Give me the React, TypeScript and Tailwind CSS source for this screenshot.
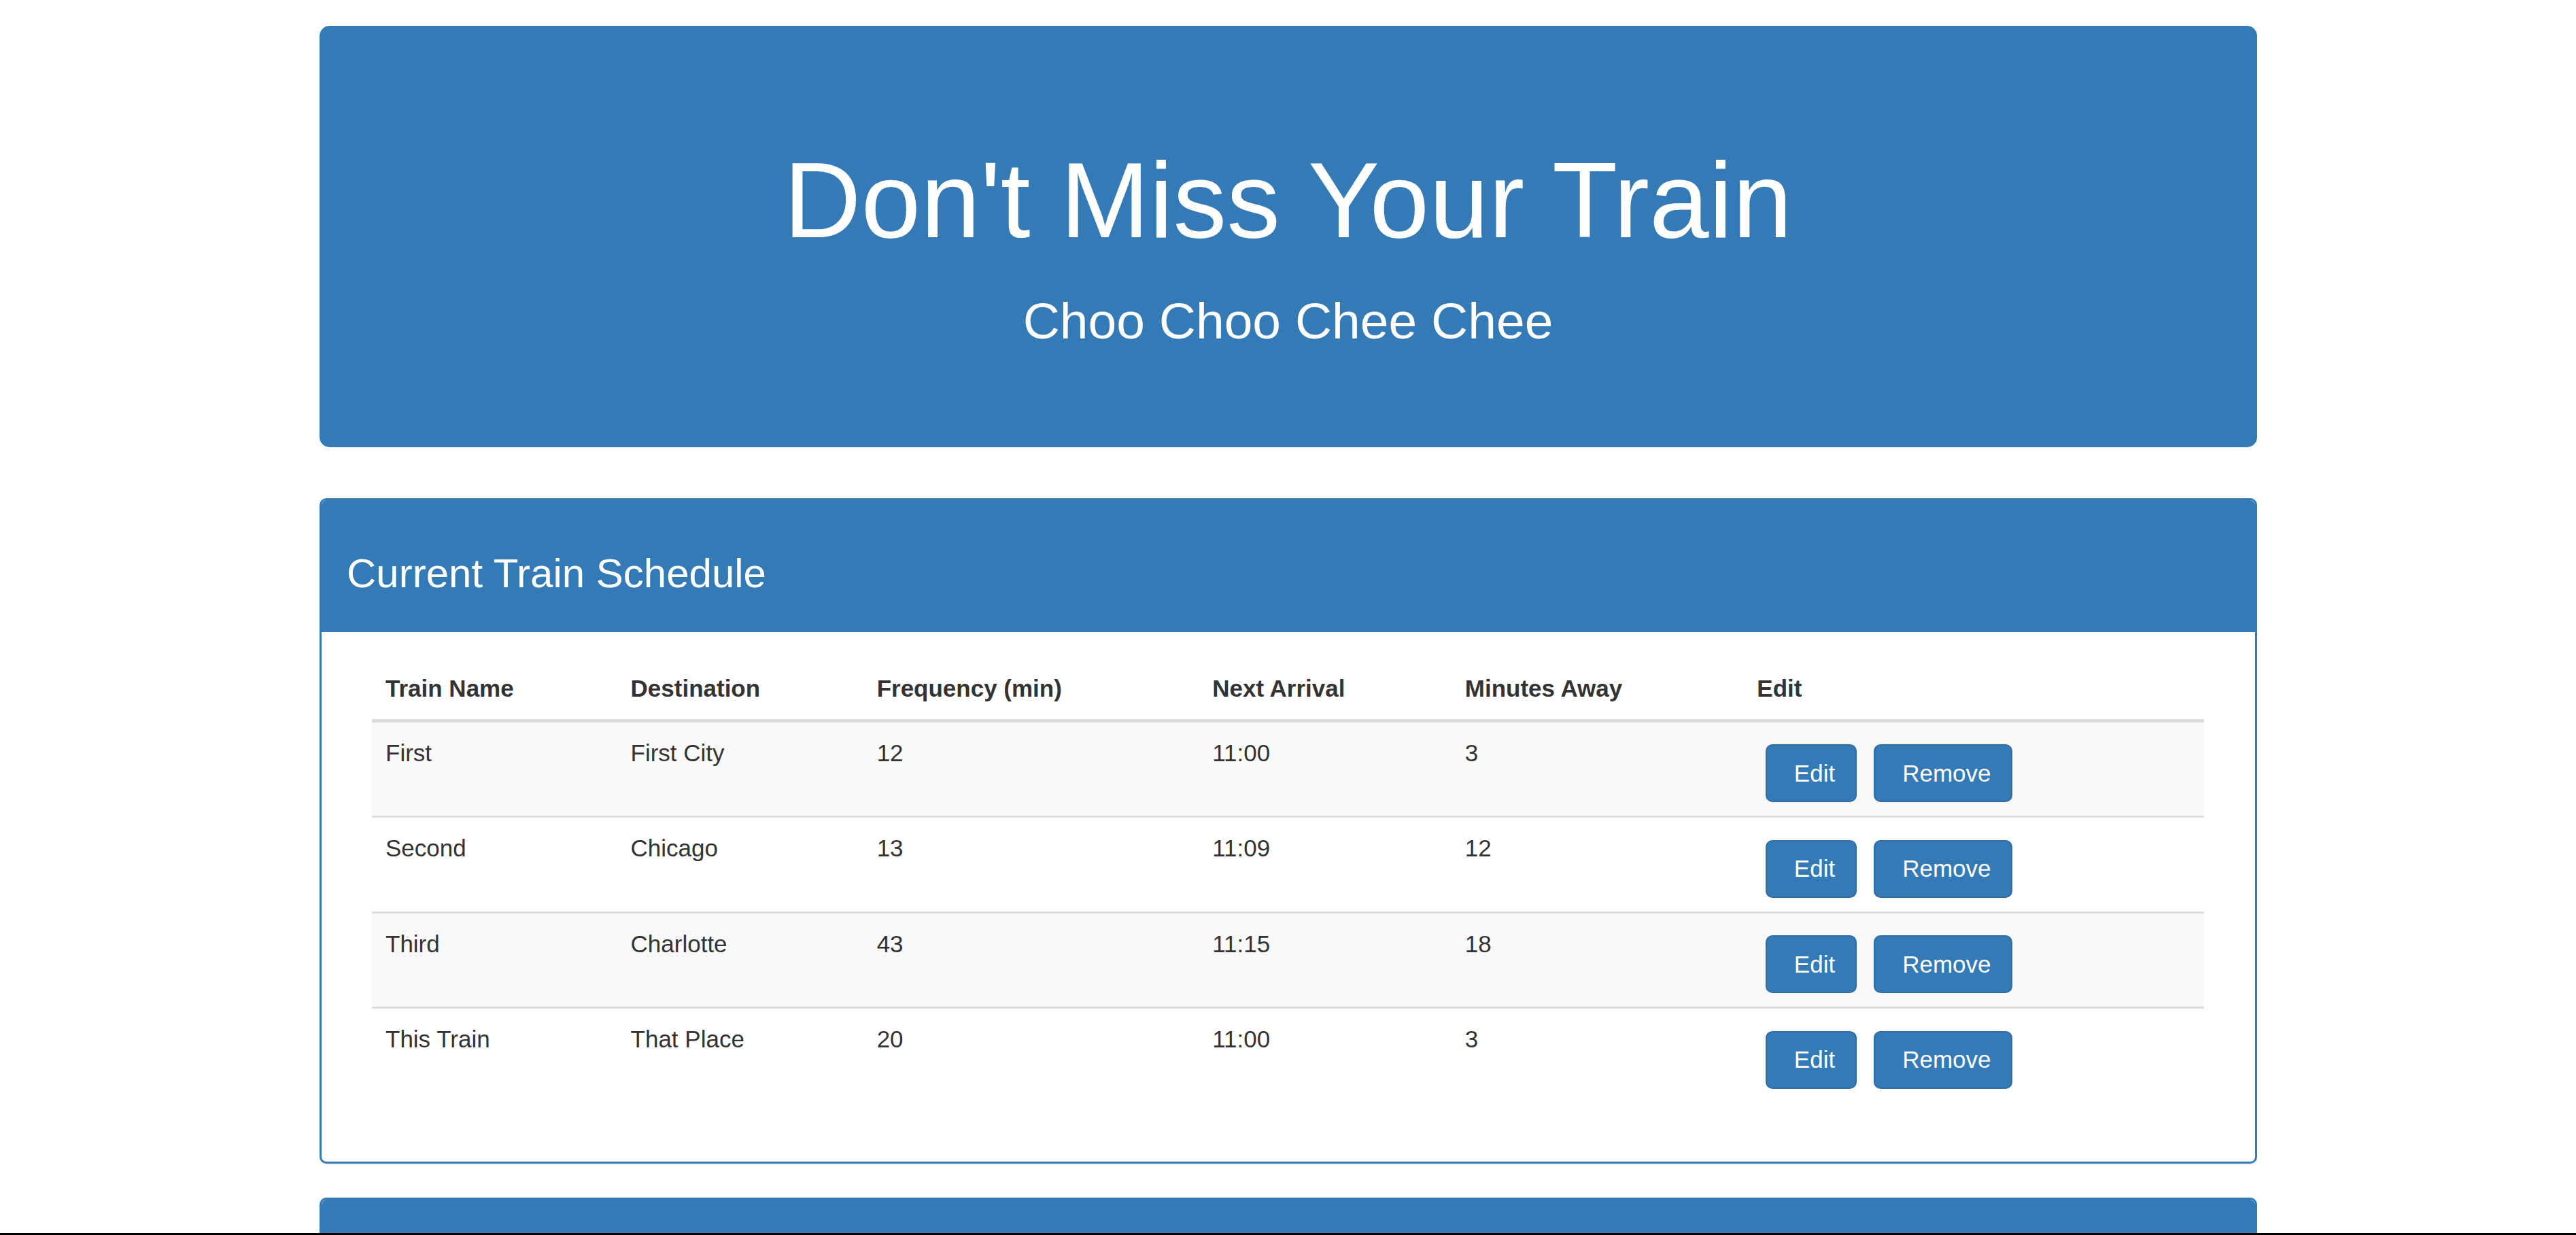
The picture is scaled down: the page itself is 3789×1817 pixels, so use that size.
import React from 'react';

const trains = [
  { name: 'First', destination: 'First City', frequency: 12, next: '11:00', away: 3 },
  { name: 'Second', destination: 'Chicago', frequency: 13, next: '11:09', away: 12 },
  { name: 'Third', destination: 'Charlotte', frequency: 43, next: '11:15', away: 18 },
  { name: 'This Train', destination: 'That Place', frequency: 20, next: '11:00', away: 3 },
];

const columns = [
  { label: 'Train Name', width: 'w-[360.5px]' },
  { label: 'Destination', width: 'w-[362px]' },
  { label: 'Frequency (min)', width: 'w-[493.5px]' },
  { label: 'Next Arrival', width: 'w-[371.5px]' },
  { label: 'Minutes Away', width: 'w-[429.5px]' },
  { label: 'Edit', width: 'w-[677.5px]' },
];

function Btn({ children }: { children: React.ReactNode }) {
  return (
    <button className="h-[85px] pl-[40px] pr-[30px] bg-[#337ab7] border-[2.5px] border-[#2e6da4] rounded-[10px] text-white text-[35px] leading-[50px]">
      {children}
    </button>
  );
}

export default function App() {
  return (
    <div className="min-h-screen bg-white text-[#333] text-[35px] leading-[50px] font-['Liberation_Sans',Arial,sans-serif]">
      <div className="w-[2925px] mx-auto px-[37.5px] pt-[37.5px]">
        {/* Jumbotron */}
        <div className="bg-[#337ab7] text-white text-center rounded-[15px] px-[150px] py-[120px] mb-[75px]">
          <h1 className="mt-[50px] mb-[50px] text-[157.5px] leading-[1.1] font-normal">Don't Miss Your Train</h1>
          <h2 className="mb-[25px] text-[75px] leading-[1.1] font-normal">Choo Choo Chee Chee</h2>
        </div>

        {/* Schedule panel */}
        <div className="bg-white border-[3px] border-[#337ab7] rounded-[10px] shadow-[0_2.5px_2.5px_rgba(0,0,0,0.05)] mb-[50px]">
          <div className="bg-[#337ab7] text-white px-[37.5px] py-[25px] rounded-t-[7.5px] border-b-[3px] border-[#337ab7]">
            <h3 className="mt-[50px] mb-[25px] text-[60px] leading-[1.1] font-normal">Current Train Schedule</h3>
          </div>
          <div className="p-[37.5px]">
            <div className="px-[37px]">
              <table className="w-full table-fixed border-collapse mb-[50px]">
                <thead>
                  <tr>
                    {columns.map((c) => (
                      <th
                        key={c.label}
                        className={`${c.width} p-[20px] text-left align-bottom font-bold border-b-[5px] border-[#ddd]`}
                      >
                        {c.label}
                      </th>
                    ))}
                  </tr>
                </thead>
                <tbody>
                  {trains.map((t, i) => (
                    <tr key={t.name} className={i % 2 === 0 ? 'bg-[#f9f9f9]' : 'bg-white'}>
                      <td className="p-[20px] align-top border-t-[3px] border-[#ddd]">{t.name}</td>
                      <td className="p-[20px] align-top border-t-[3px] border-[#ddd]">{t.destination}</td>
                      <td className="p-[20px] align-top border-t-[3px] border-[#ddd]">{t.frequency}</td>
                      <td className="p-[20px] align-top border-t-[3px] border-[#ddd]">{t.next}</td>
                      <td className="p-[20px] align-top border-t-[3px] border-[#ddd]">{t.away}</td>
                      <td className="p-[20px] align-top border-t-[3px] border-[#ddd]">
                        <div className="flex gap-[25px] mt-[12.5px] ml-[12.5px]">
                          <Btn>Edit</Btn>
                          <Btn>Remove</Btn>
                        </div>
                      </td>
                    </tr>
                  ))}
                </tbody>
              </table>
            </div>
          </div>
        </div>

        {/* Next panel, only its heading bar shows */}
        <div className="bg-white border-[3px] border-[#337ab7] rounded-[10px] mb-[50px]">
          <div className="bg-[#337ab7] h-[190px] rounded-t-[7.5px]" />
          <div className="h-[400px]" />
        </div>
      </div>
      <div className="fixed bottom-0 inset-x-0 h-[3px] bg-black" />
    </div>
  );
}
